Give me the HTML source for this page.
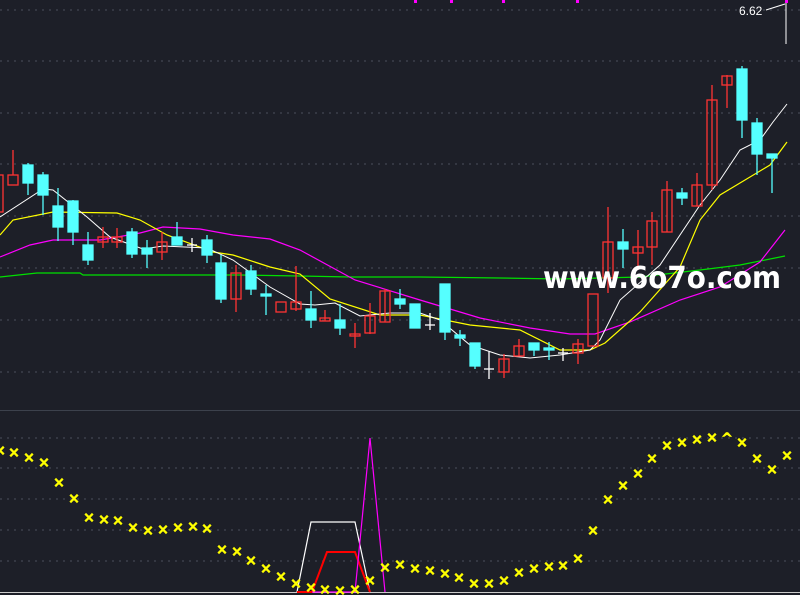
<!DOCTYPE html>
<html><head><meta charset="utf-8"><style>
html,body{margin:0;padding:0;background:#1d1f28;}
svg{display:block}
</style></head><body>
<svg width="800" height="595" xmlns="http://www.w3.org/2000/svg">
<rect width="800" height="595" fill="#1d1f28"/>
<g stroke="#4a4f5c" stroke-width="1" stroke-dasharray="2,5">
<line x1="0" y1="10" x2="800" y2="10"/><line x1="0" y1="61" x2="800" y2="61"/><line x1="0" y1="113" x2="800" y2="113"/><line x1="0" y1="164" x2="800" y2="164"/><line x1="0" y1="216" x2="800" y2="216"/><line x1="0" y1="268" x2="800" y2="268"/><line x1="0" y1="320" x2="800" y2="320"/><line x1="0" y1="372" x2="800" y2="372"/>
<line x1="0" y1="438" x2="800" y2="438"/><line x1="0" y1="468" x2="800" y2="468"/><line x1="0" y1="499" x2="800" y2="499"/><line x1="0" y1="530" x2="800" y2="530"/><line x1="0" y1="561" x2="800" y2="561"/>
</g>
<line x1="0" y1="410.5" x2="800" y2="410.5" stroke="#3c414c"/>
<line x1="0" y1="592.5" x2="800" y2="592.5" stroke="#ccc"/>
<g fill="#ff00ff"><rect x="414" y="0" width="3" height="3"/><rect x="450" y="0" width="3" height="3"/><rect x="502" y="0" width="3" height="3"/><rect x="576" y="0" width="3" height="3"/><rect x="785" y="0" width="3" height="3"/></g>
<text x="739" y="15" fill="#fff" font-family="Liberation Sans,sans-serif" font-size="12">6.62</text>
<line x1="766" y1="10" x2="785" y2="4" stroke="#fff"/><line x1="786" y1="3" x2="786" y2="44" stroke="#fff"/>
<polyline fill="none" stroke="#00e000" stroke-width="1.2" points="0,277 37,273 80,273 83,275 110,275 200,275 240,275 300,276 350,277 420,277 500,278 560,279 640,277 700,270 740,265 785,256"/>
<polyline fill="none" stroke="#ff00ff" stroke-width="1.2" points="0,257 30,245 53,240 100,240 140,233 163,227 200,229 233,235 270,239 300,250 355,280 420,300 480,318 530,328 570,334 595,334 630,322 680,300 720,287 760,262 785,230"/>
<polyline fill="none" stroke="#ffff00" stroke-width="1.2" points="0,235 13,220 53,212 117,213 140,220 167,235 213,252 233,255 270,267 300,274 330,299 380,315 420,315 470,325 520,330 560,350 590,350 605,343 640,312 680,267 700,220 720,195 745,180 770,165 787,142"/>
<polyline fill="none" stroke="#ffffff" stroke-width="1" points="0,217 43,189 53,190 87,217 110,237 143,249 163,246 207,248 233,260 270,287 300,304 315,305 335,303 360,316 390,313 420,313 440,320 470,345 500,355 530,358 560,355 590,350 600,340 620,300 660,265 700,205 720,180 740,150 760,140 773,122 787,104"/>
<g stroke="#ff3333" fill="none" stroke-width="1.3">
<rect x="-5" y="175" width="8" height="37"/>
<line x1="13" y1="150" x2="13" y2="175"/><rect x="8" y="175" width="10" height="10"/>
<line x1="103" y1="227" x2="103" y2="248"/><rect x="98" y="237" width="10" height="5"/>
<line x1="117" y1="228" x2="117" y2="248"/><rect x="112" y="237" width="10" height="5"/>
<line x1="162" y1="232" x2="162" y2="260"/><rect x="157" y="242" width="10" height="10"/>
<line x1="236" y1="265" x2="236" y2="312"/><rect x="231" y="273" width="10" height="26"/>
<rect x="276" y="302" width="10" height="10"/>
<line x1="296" y1="266" x2="296" y2="311"/><rect x="291" y="302" width="10" height="7"/>
<line x1="325" y1="310" x2="325" y2="321"/><rect x="320" y="318" width="10" height="3"/>
<line x1="355" y1="323" x2="355" y2="348"/><rect x="350" y="334" width="10" height="2"/>
<line x1="370" y1="303" x2="370" y2="334"/><rect x="365" y="316" width="10" height="17"/>
<line x1="385" y1="289" x2="385" y2="322"/><rect x="380" y="291" width="10" height="31"/>
<line x1="504" y1="354" x2="504" y2="378"/><rect x="499" y="359" width="10" height="13"/>
<line x1="519" y1="339" x2="519" y2="356"/><rect x="514" y="346" width="10" height="10"/>
<line x1="578" y1="339" x2="578" y2="364"/><rect x="573" y="344" width="10" height="9"/>
<rect x="588" y="294" width="10" height="52"/>
<line x1="608" y1="207" x2="608" y2="293"/><rect x="603" y="242" width="10" height="36"/>
<line x1="638" y1="230" x2="638" y2="270"/><rect x="633" y="247" width="10" height="6"/>
<line x1="652" y1="212" x2="652" y2="265"/><rect x="647" y="221" width="10" height="26"/>
<line x1="667" y1="181" x2="667" y2="232"/><rect x="662" y="190" width="10" height="42"/>
<line x1="697" y1="173" x2="697" y2="206"/><rect x="692" y="185" width="10" height="21"/>
<line x1="712" y1="85" x2="712" y2="190"/><rect x="707" y="100" width="10" height="85"/>
<line x1="727" y1="75" x2="727" y2="108"/><rect x="722" y="76" width="10" height="9"/>
</g>
<g stroke="#55ffff" fill="#55ffff" stroke-width="1.3">
<line x1="28" y1="163" x2="28" y2="195"/><rect x="23" y="165" width="10" height="18"/>
<line x1="43" y1="172" x2="43" y2="215"/><rect x="38" y="175" width="10" height="20"/>
<line x1="58" y1="188" x2="58" y2="241"/><rect x="53" y="206" width="10" height="21"/>
<line x1="73" y1="200" x2="73" y2="245"/><rect x="68" y="201" width="10" height="31"/>
<line x1="88" y1="232" x2="88" y2="265"/><rect x="83" y="245" width="10" height="15"/>
<line x1="132" y1="228" x2="132" y2="258"/><rect x="127" y="232" width="10" height="22"/>
<line x1="147" y1="240" x2="147" y2="268"/><rect x="142" y="248" width="10" height="6"/>
<line x1="177" y1="222" x2="177" y2="245"/><rect x="172" y="237" width="10" height="8"/>
<line x1="207" y1="235" x2="207" y2="263"/><rect x="202" y="240" width="10" height="15"/>
<line x1="221" y1="255" x2="221" y2="303"/><rect x="216" y="263" width="10" height="36"/>
<line x1="251" y1="265" x2="251" y2="295"/><rect x="246" y="271" width="10" height="18"/>
<line x1="266" y1="285" x2="266" y2="315"/><rect x="261" y="294" width="10" height="2"/>
<line x1="311" y1="291" x2="311" y2="328"/><rect x="306" y="309" width="10" height="11"/>
<line x1="340" y1="304" x2="340" y2="335"/><rect x="335" y="320" width="10" height="8"/>
<line x1="400" y1="289" x2="400" y2="309"/><rect x="395" y="299" width="10" height="5"/>
<line x1="415" y1="304" x2="415" y2="328"/><rect x="410" y="304" width="10" height="24"/>
<line x1="445" y1="284" x2="445" y2="340"/><rect x="440" y="284" width="10" height="48"/>
<line x1="460" y1="330" x2="460" y2="346"/><rect x="455" y="335" width="10" height="3"/>
<line x1="475" y1="343" x2="475" y2="369"/><rect x="470" y="343" width="10" height="23"/>
<line x1="534" y1="343" x2="534" y2="356"/><rect x="529" y="343" width="10" height="7"/>
<line x1="549" y1="342" x2="549" y2="360"/><rect x="544" y="348" width="10" height="2"/>
<line x1="623" y1="229" x2="623" y2="268"/><rect x="618" y="242" width="10" height="7"/>
<line x1="682" y1="188" x2="682" y2="205"/><rect x="677" y="193" width="10" height="5"/>
<line x1="742" y1="66" x2="742" y2="138"/><rect x="737" y="69" width="10" height="51"/>
<line x1="757" y1="118" x2="757" y2="175"/><rect x="752" y="123" width="10" height="31"/>
<line x1="772" y1="154" x2="772" y2="193"/><rect x="767" y="154" width="10" height="4"/>
</g>
<g stroke="#fff" stroke-width="1.3">
<line x1="187" y1="245" x2="197" y2="245"/><line x1="192" y1="238" x2="192" y2="252"/>
<line x1="425" y1="325" x2="435" y2="325"/><line x1="430" y1="313" x2="430" y2="330"/>
<line x1="484" y1="369" x2="494" y2="369"/><line x1="489" y1="351" x2="489" y2="379"/>
<line x1="558" y1="353" x2="568" y2="353"/><line x1="563" y1="348" x2="563" y2="361"/>
</g>
<text x="543" y="288" fill="#fff" font-family="DejaVu Sans,sans-serif" font-weight="bold" font-size="30" textLength="238" lengthAdjust="spacingAndGlyphs">www.6o7o.com</text>
<polyline fill="none" stroke="#fff" stroke-width="1.2" points="297,592 311,522 355,522 370,592"/>
<polyline fill="none" stroke="#ff0000" stroke-width="2" points="297,592 312,592 327,552 355,552 370,592"/>
<polyline fill="none" stroke="#ff00ff" stroke-width="1.2" points="312,592 355,592 370,438 385,592"/>
<g fill="#ffff00" stroke="#ffff00" stroke-width="0.6" font-family="DejaVu Sans,sans-serif" font-weight="bold" font-size="14" text-anchor="middle">
<text x="0" y="455">×</text><text x="14" y="457">×</text><text x="29" y="462">×</text><text x="44" y="467">×</text><text x="59" y="487">×</text><text x="74" y="503">×</text><text x="89" y="522">×</text><text x="104" y="524">×</text><text x="118" y="525">×</text><text x="133" y="532">×</text><text x="148" y="535">×</text><text x="163" y="534">×</text><text x="178" y="532">×</text><text x="193" y="531">×</text><text x="207" y="533">×</text><text x="222" y="554">×</text><text x="237" y="556">×</text><text x="251" y="565">×</text><text x="266" y="573">×</text><text x="281" y="581">×</text><text x="296" y="588">×</text><text x="311" y="592">×</text><text x="325" y="594">×</text><text x="340" y="595">×</text><text x="355" y="594">×</text><text x="370" y="585">×</text><text x="385" y="572">×</text><text x="400" y="569">×</text><text x="415" y="573">×</text><text x="430" y="575">×</text><text x="445" y="578">×</text><text x="459" y="582">×</text><text x="474" y="588">×</text><text x="489" y="588">×</text><text x="504" y="585">×</text><text x="519" y="577">×</text><text x="534" y="573">×</text><text x="549" y="571">×</text><text x="563" y="570">×</text><text x="578" y="563">×</text><text x="593" y="535">×</text><text x="608" y="504">×</text><text x="623" y="490">×</text><text x="638" y="478">×</text><text x="652" y="463">×</text><text x="667" y="450">×</text><text x="682" y="447">×</text><text x="697" y="444">×</text><text x="712" y="442">×</text><text x="727" y="443">^</text><text x="742" y="447">×</text><text x="757" y="463">×</text><text x="772" y="474">×</text><text x="787" y="460">×</text>
</g>
</svg>
</body></html>
